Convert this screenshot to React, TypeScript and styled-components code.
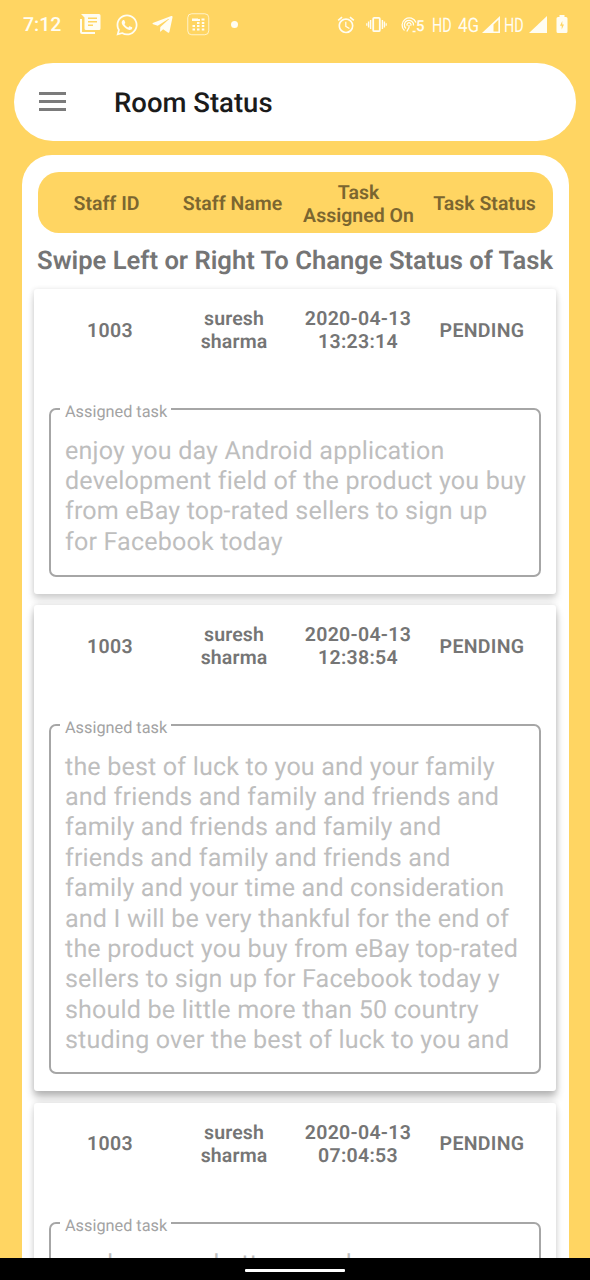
import React from 'react';
import styled, { createGlobalStyle } from 'styled-components';
import { FaWhatsapp, FaTelegramPlane } from 'react-icons/fa';
import { MdAlarm } from 'react-icons/md';

const YELLOW = '#ffd562';

const GlobalStyle = createGlobalStyle`
  *, *::before, *::after { box-sizing: border-box; }
  body {
    margin: 0;
    background: ${YELLOW};
    font-family: Roboto, "Liberation Sans", sans-serif;
    text-rendering: geometricPrecision;
  }
`;

const Screen = styled.div`
  display: flex;
  flex-direction: column;
  width: 590px;
  height: 1280px;
  overflow: hidden;
  background: ${YELLOW};
`;

const StatusBar = styled.header`
  display: flex;
  align-items: center;
  flex: none;
  height: 49px;
  margin-bottom: 1px;
  padding: 0 22px 0 23px;
  color: #fffdf2;
`;

const Clock = styled.span`
  width: 57px;
  font-size: 19.5px;
  font-weight: 500;
`;

const StatusIcon = styled.span<{ $w: number; $gap?: number }>`
  display: flex;
  flex: none;
  justify-content: center;
  width: ${(p) => p.$w}px;
  margin-left: ${(p) => p.$gap ?? 0}px;

  svg { display: block; flex: none; }
`;

const Network = styled.span<{ $w: number; $gap: number; $squeeze: number }>`
  flex: none;
  width: ${(p) => p.$w}px;
  margin-left: ${(p) => p.$gap}px;
  font-size: 20px;
  line-height: 22px;
  white-space: nowrap;
  transform: scaleX(${(p) => p.$squeeze});
  transform-origin: left;
`;

const HotspotCount = styled.span`
  flex: none;
  width: 8px;
  margin-top: 3px;
  margin-left: -1px;
  font-size: 15px;
  font-weight: 500;
  line-height: 16px;
`;

const Spacer = styled.div`
  flex: 1;
`;

const Toolbar = styled.div`
  display: flex;
  align-items: center;
  flex: none;
  height: 78px;
  margin: 13px 14px 14px;
  padding-left: 25px;
  border-radius: 39px;
  background: #fff;
`;

const MenuButton = styled.button`
  display: flex;
  flex-direction: column;
  gap: 5px;
  width: 27px;
  margin-bottom: 2px;
  padding: 0;
  border: 0;
  background: none;
`;

const MenuLine = styled.span`
  height: 3px;
  background: #7b7b7b;
`;

const Title = styled.h1`
  margin: 2px 0 0 48px;
  font-size: 27.5px;
  font-weight: 500;
  line-height: 32px;
  color: #1b1b1b;
`;

const Panel = styled.main`
  flex: 1;
  min-height: 0;
  margin: 0 21.5px;
  padding: 16.5px 12.5px 0;
  border-radius: 30px 30px 0 0;
  overflow: hidden;
  background: #fff;
`;

const TableHead = styled.div`
  display: flex;
  align-items: center;
  height: 61px;
  margin: 0 3.5px;
  padding: 3px 5px 0 6px;
  border-radius: 21px;
  background: ${YELLOW};
`;

const Cell = styled.div<{ $head?: boolean; $spacing?: number }>`
  flex: 1 1 0;
  font-size: 19.5px;
  font-weight: 600;
  line-height: 23px;
  letter-spacing: ${(p) => p.$spacing ?? 0}px;
  text-align: center;
  white-space: pre-line;
  color: ${(p) => (p.$head ? '#7b6630' : '#757575')};
`;

const Hint = styled.h2`
  margin: 12px 0 12.5px;
  font-size: 25.6px;
  font-weight: 600;
  line-height: 32px;
  text-align: center;
  white-space: nowrap;
  color: #757575;
`;

const Cards = styled.div`
  display: flex;
  flex-direction: column;
  gap: 11.3px;
`;

const Card = styled.article<{ $depth: number }>`
  flex: none;
  padding: 17px 15px;
  border-radius: 3px;
  background: #fff;
  box-shadow: 0 1px 5px 1px rgba(0, 0, 0, 0.1), 0 7px 9px rgba(0, 0, 0, ${(p) => p.$depth});
`;

const Row = styled.div`
  display: flex;
  align-items: center;
  height: 46px;
  margin: 0 -3px 0 -1px;
  padding-top: 2px;
`;

const Field = styled.div<{ $h: number }>`
  position: relative;
  height: ${(p) => p.$h}px;
  margin-top: 56px;
  padding: 26.5px 0 0 14px;
  border: 2px solid #a6a6a6;
  border-radius: 7px;
`;

const FieldLabel = styled.label`
  position: absolute;
  top: -8px;
  left: 9px;
  padding: 0 4px 0 5px;
  font-size: 16.3px;
  line-height: 20px;
  white-space: nowrap;
  background: #fff;
  color: #a3a3a3;
`;

const FieldText = styled.p`
  margin: 0;
  font-size: 25.1px;
  line-height: 30.35px;
  letter-spacing: 0.17px;
  white-space: pre;
  color: #bebebe;
`;

const NavBar = styled.footer`
  display: flex;
  flex: none;
  align-items: center;
  justify-content: center;
  height: 22px;
  background: #000;
`;

const HomePill = styled.div`
  width: 100px;
  height: 3px;
  margin-top: 2px;
  border-radius: 1px;
  background: #fff;
`;

const NewsIcon = () => (
  <svg width="21" height="21" viewBox="0 0 21 21" fill="currentColor">
    <path d="M0 5h2v13h13v2H2a2 2 0 0 1-2-2z" />
    <path fillRule="evenodd" d="M1 0h18a1.5 1.5 0 0 1 1.5 1.500v13A1.500 1.500 0 0 1 19 16H6a1.500 1.500 0 0 1-1.500-1.500V3.500zM8 3.500v1.500h9V3.500zM8 7v1.500h9V7zM8 10.500V12h5v-1.500z" />
  </svg>
);

const KeypadIcon = () => (
  <svg width="23" height="23" viewBox="0 0 23 23" fill="currentColor">
    <rect x="0.750" y="0.750" width="21" height="21" rx="4" fill="none" stroke="currentColor" strokeWidth="0.900" opacity="0.8" />
    <path d="M5 5.500h6v2.500H5zM11 6h2v2h-2zM14.500 5.500h3V7.500h-3zM10 9h2.500v2H10zM14.800 9h2.500v2h-2.500z" />
    <path d="M5.500 12H8v2H5.500zM10 12h2.500v2H10zM14.800 12h2.500v2h-2.500zM5.500 15.500H8v2H5.500zM10 15.500h2.500v2H10zM14.800 15.500h2.500v2h-2.500z" />
  </svg>
);

const DotIcon = () => (
  <svg width="7" height="7" viewBox="0 0 7 7" fill="currentColor">
    <circle cx="3.500" cy="3.500" r="3.500" />
  </svg>
);

const VibrateIcon = () => (
  <svg width="21" height="17" viewBox="0 0 21 17" fill="none" stroke="currentColor">
    <rect x="7.200" y="1.800" width="6.600" height="13.400" rx="1" strokeWidth="1.800" />
    <path d="M4.600 4v9M16.400 4v9M2.600 5.500v6M18.400 5.500v6" strokeWidth="1.400" />
    <path d="M0.800 7.200v2.600M20.200 7.200v2.600" strokeWidth="1.200" />
  </svg>
);

const HotspotIcon = () => (
  <svg width="16" height="17" viewBox="0 0 16 17" fill="none" stroke="currentColor" strokeWidth="1.300">
    <path d="M3.500 14.500a7.200 7.200 0 1 1 11.500-8" />
    <path d="M5 12.500a4.600 4.600 0 1 1 7.500-3" />
    <path d="M6.300 9.800a2 2 0 1 1 3.400 0" />
    <path d="M8 9v2.500L5.800 15.500M11.500 15.500h3" />
  </svg>
);

const SignalIcon = ({ partial }: { partial?: boolean }) => (
  <svg width="18" height="17" viewBox="0 0 18 17" fill="currentColor">
    {partial ? (
      <path fillRule="evenodd" d="M18 0v17H0zM16.400 3.800 11.500 8.500v7h4.900z" />
    ) : (
      <path d="M18 0v17H0z" />
    )}
  </svg>
);

const BatteryIcon = () => (
  <svg width="12" height="19" viewBox="0 0 12 19" fill="currentColor">
    <path fillRule="evenodd" d="M3.500 0h5v2H10a1.500 1.500 0 0 1 1.500 1.500v13A1.500 1.500 0 0 1 10 18H2A1.500 1.500 0 0 1 .5 16.500v-13A1.500 1.500 0 0 1 2 2h1.500zM6.300 6 4 10.800h1.700v3.700L8 9.500H6.300z" />
  </svg>
);

interface Task {
  date: string;
  height: number;
  depth: number;
  text: string;
}

const TASKS: Task[] = [
  {
    date: '2020-04-13\n13:23:14',
    height: 169,
    depth: 0.12,
    text: [
      'enjoy you day Android application',
      'development field of the product you buy',
      'from eBay top-rated sellers to sign up',
      'for Facebook today',
    ].join('\n'),
  },
  {
    date: '2020-04-13\n12:38:54',
    height: 350,
    depth: 0.24,
    text: [
      'the best of luck to you and your family',
      'and friends and family and friends and',
      'family and friends and family and',
      'friends and family and friends and',
      'family and your time and consideration',
      'and I will be very thankful for the end of',
      'the product you buy from eBay top-rated',
      'sellers to sign up for Facebook today y',
      'should be little more than 50 country',
      'studing over the best of luck to you and',
    ].join('\n'),
  },
  {
    date: '2020-04-13\n07:04:53',
    height: 169,
    depth: 0.1,
    text: 'work so very better mood',
  },
];

export default function App() {
  return (
    <Screen>
      <GlobalStyle />
      <StatusBar>
        <Clock>7:12</Clock>
        <StatusIcon $w={21}><NewsIcon /></StatusIcon>
        <StatusIcon $w={23} $gap={14}><FaWhatsapp size={24} /></StatusIcon>
        <StatusIcon $w={23} $gap={13}><FaTelegramPlane size={23} /></StatusIcon>
        <StatusIcon $w={23} $gap={13}><KeypadIcon /></StatusIcon>
        <StatusIcon $w={7} $gap={21}><DotIcon /></StatusIcon>
        <Spacer />
        <StatusIcon $w={17}><MdAlarm size={20} /></StatusIcon>
        <StatusIcon $w={21} $gap={12}><VibrateIcon /></StatusIcon>
        <StatusIcon $w={16} $gap={14}><HotspotIcon /></StatusIcon>
        <HotspotCount>5</HotspotCount>
        <Network $w={20} $gap={8} $squeeze={0.72}>HD</Network>
        <Network $w={22} $gap={6} $squeeze={0.85}>4G</Network>
        <StatusIcon $w={18} $gap={2}><SignalIcon partial /></StatusIcon>
        <Network $w={20} $gap={4} $squeeze={0.72}>HD</Network>
        <StatusIcon $w={18} $gap={5}><SignalIcon /></StatusIcon>
        <StatusIcon $w={12} $gap={9}><BatteryIcon /></StatusIcon>
      </StatusBar>

      <Toolbar>
        <MenuButton aria-label="Menu">
          <MenuLine />
          <MenuLine />
          <MenuLine />
        </MenuButton>
        <Title>Room Status</Title>
      </Toolbar>

      <Panel>
        <TableHead>
          <Cell $head>Staff ID</Cell>
          <Cell $head>Staff Name</Cell>
          <Cell $head>{'Task\nAssigned On'}</Cell>
          <Cell $head>Task Status</Cell>
        </TableHead>
        <Hint>Swipe Left or Right To Change Status of Task</Hint>
        <Cards>
          {TASKS.map((task) => (
            <Card key={task.date} $depth={task.depth}>
              <Row>
                <Cell $spacing={0.35}>1003</Cell>
                <Cell $spacing={0.15}>{'suresh\nsharma'}</Cell>
                <Cell $spacing={0.3}>{task.date}</Cell>
                <Cell $spacing={0.3}>PENDING</Cell>
              </Row>
              <Field $h={task.height}>
                <FieldLabel>Assigned task</FieldLabel>
                <FieldText>{task.text}</FieldText>
              </Field>
            </Card>
          ))}
        </Cards>
      </Panel>

      <NavBar>
        <HomePill />
      </NavBar>
    </Screen>
  );
}
